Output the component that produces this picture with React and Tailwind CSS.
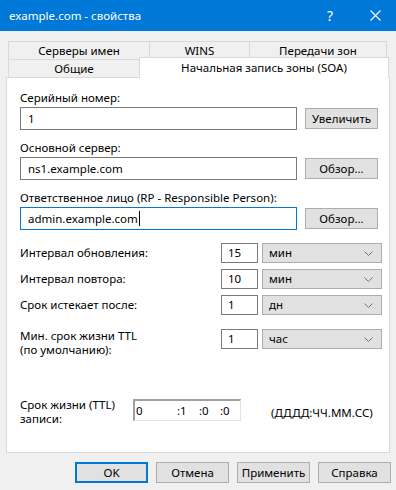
import React from "react";

const Btn = ({ children, primary }) => (
  <div
    className={`w-[73px] h-[21px] flex items-center justify-center bg-[#e1e1e1] text-black ${
      primary ? "border-2 border-[#0078d7]" : "border border-[#adadad]"
    }`}
  >
    {children}
  </div>
);

const Field = ({ value, focused }) => (
  <div
    className={`w-[277px] h-[23px] flex items-center pl-[7px] bg-white border ${
      focused ? "border-[#0078d7]" : "border-[#7a7a7a]"
    }`}
  >
    <span>{value}</span>
    {focused && <span className="w-px h-[15px] bg-black ml-px" />}
  </div>
);

const Chevron = () => (
  <svg width="9" height="5" viewBox="0 0 9 5" className="ml-auto mr-[8px]">
    <polyline points="0.5,0.5 4.5,4.5 8.5,0.5" fill="none" stroke="#707070" strokeWidth="1" />
  </svg>
);

const IntervalRow = ({ label, num, unit, two }) => (
  <div className={`flex ${two ? "items-start" : "items-center"} h-[20px]`}>
    <div className={`w-[201px] ${two ? "leading-[14px]" : ""}`}>{label}</div>
    <div className="w-[37px] h-[20px] flex items-center pl-[6px] border border-[#7a7a7a] bg-white">{num}</div>
    <div className="ml-[4px] w-[120px] h-[20px] flex items-center pl-[6px] bg-[#e1e1e1] border border-[#adadad]">
      <span>{unit}</span>
      <Chevron />
    </div>
  </div>
);

export default function App() {
  return (
    <div className="w-[396px] h-[490px] bg-[#f0f0f0] overflow-hidden text-[11.5px] text-black font-['Noto_Sans',sans-serif] leading-[16px]">
      {/* title bar */}
      <div className="h-[31px] bg-[#0078d7] flex items-center text-white">
        <span className="pl-[9px] text-[11.5px]">example.com - свойства</span>
        <span className="ml-auto mr-[37px] text-[14px]">?</span>
        <svg width="11" height="11" viewBox="0 0 11 11" className="mr-[15px]">
          <path d="M0.5 0.5 L10.5 10.5 M10.5 0.5 L0.5 10.5" stroke="#fff" strokeWidth="1.1" />
        </svg>
      </div>

      {/* tabs */}
      <div className="pl-[8px] pt-[10px]">
        <div className="flex h-[18px]">
          <div className="w-[141px] border-t border-l border-[#d9d9d9] flex items-center justify-center">Серверы имен</div>
          <div className="w-[100px] border-t border-l border-[#d9d9d9] flex items-center justify-center">WINS</div>
          <div className="w-[138px] border-t border-l border-r border-[#d9d9d9] flex items-center justify-center">Передачи зон</div>
        </div>
        <div className="flex items-start h-[18px]">
          <div className="w-[131px] h-[18px] border-t border-l border-[#d9d9d9] flex items-center justify-center">Общие</div>
          <div className="relative z-10 -mt-[2px] w-[250px] h-[21px] bg-white border-t border-l border-r border-[#d9d9d9] flex justify-center pt-[2px]">
            Начальная запись зоны (SOA)
          </div>
        </div>
      </div>

      {/* panel */}
      <div className="ml-[6px] w-[384px] h-[376px] bg-white border border-[#d9d9d9] pl-[13px] pt-[12px]">
        <div>Серийный номер:</div>
        <div className="mt-[1px] flex items-center gap-[8px]">
          <Field value="1" />
          <Btn>Увеличить</Btn>
        </div>

        <div className="mt-[10px]">Основной сервер:</div>
        <div className="mt-[1px] flex items-center gap-[8px]">
          <Field value="ns1.example.com" />
          <Btn>Обзор...</Btn>
        </div>

        <div className="mt-[10px]">Ответственное лицо (RP - Responsible Person):</div>
        <div className="mt-[1px] flex items-center gap-[8px]">
          <Field value="admin.example.com" focused />
          <Btn>Обзор...</Btn>
        </div>

        <div className="mt-[13px] flex flex-col gap-[6px]">
          <IntervalRow label="Интервал обновления:" num="15" unit="мин" />
          <IntervalRow label="Интервал повтора:" num="10" unit="мин" />
          <IntervalRow label="Срок истекает после:" num="1" unit="дн" />
        </div>
        <div className="mt-[14px]">
          <IntervalRow
            two
            num="1"
            unit="час"
            label={
              <>
                Мин. срок жизни TTL
                <br />
                (по умолчанию):
              </>
            }
          />
        </div>

        <div className="mt-[50px] flex items-start">
          <div className="w-[113px] leading-[14px] -mt-[1px]">
            Срок жизни (TTL)
            <br />
            записи:
          </div>
          <div className="w-[108px] h-[22px] flex items-center bg-white border-t-2 border-l-2 border-t-[#a0a0a0] border-l-[#a0a0a0] border-b border-r border-b-[#e3e3e3] border-r-[#e3e3e3]">
            <span className="w-[42px] pl-[1px]">0</span>
            <span className="w-[22px]">:1</span>
            <span className="w-[21px]">:0</span>
            <span>:0</span>
          </div>
          <div className="ml-[30px] self-center">(ДДДД:ЧЧ.ММ.СС)</div>
        </div>
      </div>

      {/* bottom buttons */}
      <div className="mt-[9px] pl-[75px] flex gap-[8px]">
        <Btn primary>OK</Btn>
        <Btn>Отмена</Btn>
        <Btn>Применить</Btn>
        <Btn>Справка</Btn>
      </div>
    </div>
  );
}
